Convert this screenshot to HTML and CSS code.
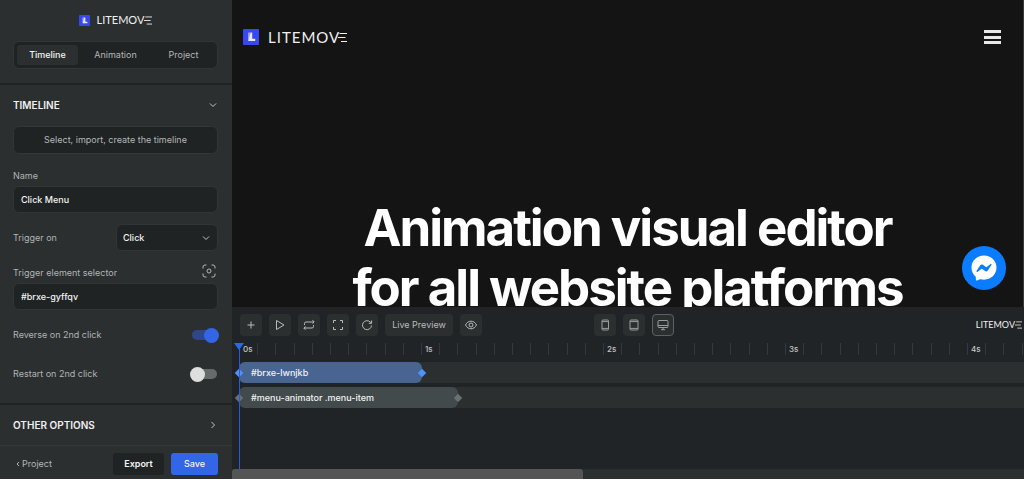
FILE: index.html
```html
<!DOCTYPE html>
<html lang="en">
<head>
<meta charset="utf-8">
<title>Litemove</title>
<link rel="stylesheet" href="styles.css">
</head>
<body>
<div class="app">
  <aside class="sidebar">
    <header class="side-head">
      <div class="brand brand-small">
        <svg class="mark" viewBox="0 0 16 16"><rect width="16" height="16" rx="1" fill="#3a47f0"/><path d="M5 3.500h2.600v8.500H5z" fill="#98a0ff"/><path d="M7.600 3.500h1.600v6.300h3V12H5.500z" fill="#e8eaff"/></svg>
        <span class="word">LITEMOV<svg class="bars" viewBox="0 0 9 10"><path d="M1.500 1H9M0 5h7.500M3 9h6" /></svg></span>
      </div>
      <nav class="tabs">
        <button class="tab active">Timeline</button>
        <button class="tab">Animation</button>
        <button class="tab">Project</button>
      </nav>
    </header>
    <section class="panel">
      <button class="panel-title">TIMELINE<svg class="chev" viewBox="0 0 10 10"><path d="M2 3.500l3 3 3-3"/></svg></button>
      <button class="picker">Select, import, create the timeline</button>
      <label class="label" for="name">Name</label>
      <input class="field" id="name" value="Click Menu">
      <div class="row row-select">
        <label class="label" for="trigger">Trigger on</label>
        <span class="select-wrap">
          <select class="field" id="trigger"><option>Click</option></select>
          <svg class="chev select-chev" viewBox="0 0 10 10"><path d="M2 3.500l3 3 3-3"/></svg>
        </span>
      </div>
      <div class="row row-selector">
        <label class="label" for="selector">Trigger element selector</label>
        <button class="target" aria-label="Pick element"><svg viewBox="0 0 14 14"><path d="M1 4.500V3a2 2 0 0 1 2-2h1.500M9.500 1H11a2 2 0 0 1 2 2v1.500M13 9.500V11a2 2 0 0 1-2 2H9.500M4.500 13H3a2 2 0 0 1-2-2V9.500"/><circle cx="7" cy="7" r="2"/></svg></button>
      </div>
      <input class="field" id="selector" value="#brxe-gyffqv">
      <div class="row row-switch">
        <label class="label" for="reverse">Reverse on 2nd click</label>
        <input class="switch" type="checkbox" id="reverse" checked>
      </div>
      <div class="row row-switch">
        <label class="label" for="restart">Restart on 2nd click</label>
        <input class="switch" type="checkbox" id="restart">
      </div>
    </section>
    <section class="panel panel-closed">
      <button class="panel-title">OTHER OPTIONS<svg class="chev" viewBox="0 0 10 10"><path d="M3.500 2l3 3-3 3"/></svg></button>
    </section>
    <footer class="side-foot">
      <a class="back" href="#"><svg viewBox="0 0 4 6"><path d="M3 1L1 3l2 2"/></svg>Project</a>
      <button class="btn">Export</button>
      <button class="btn btn-primary">Save</button>
    </footer>
  </aside>

  <main class="stage">
    <div class="preview">
      <div class="site-head">
        <div class="brand brand-large">
          <svg class="mark" viewBox="0 0 16 16"><rect width="16" height="16" rx="1" fill="#3a47f0"/><path d="M5 3.500h2.600v8.500H5z" fill="#98a0ff"/><path d="M7.600 3.500h1.600v6.300h3V12H5.500z" fill="#e8eaff"/></svg>
          <span class="word">LITEMOV<svg class="bars" viewBox="0 0 9 10"><path d="M1.500 1H9M0 5h7.500M3 9h6" /></svg></span>
        </div>
        <button class="burger" aria-label="Menu"><i></i><i></i><i></i></button>
      </div>
      <h1 class="hero">Animation visual editor<br>for all website platforms</h1>
      <button class="chat" aria-label="Chat"><svg viewBox="0 0 26 26"><path fill="#fff" d="M13 .5C5.900.5.500 5.700.500 12.600c0 3.700 1.500 6.800 4 8.900.2.200.3.500.3.700l.1 2.300c0 .7.700 1.200 1.400.9l2.500-1.100c.2-.1.500-.1.700-.1 1.100.3 2.300.5 3.500.5 7.100 0 12.500-5.200 12.500-12.100S20.100.500 13 .5z"/><path fill="#0a7cff" d="M5.500 16.100l3.700-5.800c.6-.9 1.800-1.200 2.700-.5l2.900 2.200c.3.200.6.200.9 0l3.900-3c.5-.4 1.200.2.900.8l-3.700 5.800c-.6.900-1.800 1.200-2.700.5l-2.900-2.200c-.3-.2-.6-.2-.9 0l-3.900 3c-.5.400-1.200-.2-.9-.8z"/></svg></button>
    </div>

    <div class="timeline">
      <div class="toolbar">
        <button class="tool" aria-label="Add"><svg viewBox="0 0 14 14"><path d="M7 3.500v7M3.500 7h7"/></svg></button>
        <button class="tool" aria-label="Play"><svg viewBox="0 0 14 14"><path d="M3.500 2.500v9L11 7z"/></svg></button>
        <button class="tool" aria-label="Loop"><svg viewBox="0 0 14 14"><path d="M2.500 7V5.500a1.500 1.500 0 0 1 1.500-1.500h8M10.500 2.200L12.200 4l-1.700 1.500M11.500 7v1.500A1.500 1.500 0 0 1 10 10H2M3.500 8.500L1.800 10l1.700 1.800"/></svg></button>
        <button class="tool" aria-label="Fit"><svg viewBox="0 0 14 14"><path d="M2.500 5V2.500H5M9 2.500h2.500V5M11.500 9v2.500H9M5 11.500H2.500V9"/></svg></button>
        <button class="tool" aria-label="Reload"><svg viewBox="0 0 14 14"><path d="M11.500 7.500A4.500 4.500 0 1 1 10.200 4l1 .9M11.600 2.500v2.800H8.800"/></svg></button>
        <button class="tool tool-text">Live Preview</button>
        <button class="tool" aria-label="Show"><svg viewBox="0 0 14 14"><path d="M1.500 7C2.800 4.500 4.700 3.200 7 3.200S11.200 4.500 12.500 7C11.200 9.500 9.300 10.800 7 10.800S2.800 9.500 1.500 7z"/><circle cx="7" cy="7" r="2"/></svg></button>
        <div class="devices">
          <button class="tool" aria-label="Phone"><svg viewBox="0 0 14 14"><rect x="4" y="2" width="6.500" height="10" rx="1"/><path d="M4 3.600h6.500M4 10.400h6.500"/></svg></button>
          <button class="tool" aria-label="Tablet"><svg viewBox="0 0 14 14"><rect x="3" y="2" width="8" height="10" rx="1"/><path d="M3 3.600h8M3 10.400h8"/></svg></button>
          <button class="tool selected" aria-label="Desktop"><svg viewBox="0 0 14 14"><rect x="2" y="2.500" width="10" height="7" rx="1"/><path d="M2 7.500h10M7 9.500v2M5 11.700h4"/></svg></button>
        </div>
        <div class="brand brand-tiny"><span class="word">LITEMOV<svg class="bars" viewBox="0 0 9 10"><path d="M1.500 1H9M0 5h7.500M3 9h6" /></svg></span></div>
      </div>
      <div class="lanes">
        <div class="ruler">
          <div class="second"><b>0s</b><i></i><i></i><i></i><i></i><i></i><i></i><i></i><i></i><i></i></div>
          <div class="second"><b>1s</b><i></i><i></i><i></i><i></i><i></i><i></i><i></i><i></i><i></i></div>
          <div class="second"><b>2s</b><i></i><i></i><i></i><i></i><i></i><i></i><i></i><i></i><i></i></div>
          <div class="second"><b>3s</b><i></i><i></i><i></i><i></i><i></i><i></i><i></i><i></i><i></i></div>
          <div class="second"><b>4s</b><i></i><i></i><i></i><i></i><i></i><i></i><i></i><i></i><i></i></div>
        </div>
        <div class="lane"><div class="clip clip-blue">#brxe-lwnjkb</div></div>
        <div class="lane"><div class="clip clip-gray">#menu-animator .menu-item</div></div>
        <div class="playhead"></div>
      </div>
      <div class="scroll"><div class="thumb"></div></div>
    </div>
  </main>
</div>
</body>
</html>
```
FILE: styles.css
```css
* { box-sizing: border-box; }
body { margin: 0; background: #141414; color: #b4b7b8; font: 9px/12px Inter, "Liberation Sans", sans-serif; }
button, input, select { font: inherit; color: inherit; margin: 0; padding: 0; border: 0; background: none; }
svg { display: block; fill: none; stroke: currentColor; }
.app { display: grid; grid-template-columns: 232px minmax(0, 1fr); height: 100vh; overflow: hidden; }

.sidebar { display: flex; flex-direction: column; background: #2b2f30; }
.side-head { padding: 14px 14px 14px 13px; border-bottom: 2px solid #1f2324; }
.brand { display: flex; align-items: center; color: #f0f0f0; }
.brand .mark { stroke: none; }
.word { display: flex; align-items: center; font-family: Lato, sans-serif; }
.bars { stroke-width: 1; }
.brand-small { justify-content: center; gap: 7px; height: 12px; }
.brand-small .mark { width: 11px; height: 11px; }
.brand-small .word { font-size: 11px; }
.brand-small .bars { width: 8px; height: 9px; }

.tabs { display: flex; gap: 7px; margin-top: 15px; padding: 3px; height: 28px; background: #1f2324; border: 1px solid #303536; border-radius: 6px; }
.tab { flex: 1; border-radius: 3px; }
.tab.active { background: #2b2f30; color: #f2f2f2; font-weight: 500; }

.panel { display: flex; flex-direction: column; padding: 12px 14px 12px 13px; border-bottom: 2px solid #1f2324; }
.panel-title { display: flex; align-items: center; justify-content: space-between; height: 16px; color: #f0f0f0; font-size: 10px; font-weight: 600; }
.chev { width: 10px; height: 10px; color: #c0c3c4; stroke-width: 1; }
.picker, .field { width: 100%; background: #1f2324; border: 1px solid #303536; border-radius: 6px; }
.picker { height: 28px; margin: 13px 0 16px; }
.field { height: 27px; padding: 0 7px; color: #f2f2f2; font-weight: 500; }
.label { color: #b0b4b5; }
.picker + .label { margin-bottom: 4px; }
.row { display: flex; align-items: center; justify-content: space-between; }
.row-select { margin: 11px 0; }
.select-wrap { position: relative; width: 102px; }
select.field { appearance: none; display: block; padding: 0 6px; }
.select-chev { position: absolute; right: 7px; top: 9px; pointer-events: none; }
.row-selector { height: 17px; align-items: flex-end; margin: 0 2px 4px 0; }
.target { width: 14px; height: 16px; }
.target svg { width: 14px; height: 14px; }
.row-switch { height: 16px; margin-top: 17px; }
.row-switch + .row-switch { margin: 23px 0 9px; }
.switch { appearance: none; display: flex; align-items: center; width: 25px; height: 10px; margin-right: 1px; border-radius: 5px; background: #666a6b; }
.switch::before { content: ""; width: 15px; height: 15px; margin-left: -2px; flex: none; border-radius: 50%; background: #dedede; }
.switch:checked { background: #2d4788; justify-content: flex-end; }
.switch:checked::before { background: #3366e6; margin-right: -2px; }
.panel-closed { border-bottom: 1px solid #343839; }
.side-foot { display: flex; align-items: center; gap: 7px; padding: 7px 14px 4px 16px; }
.back { display: flex; align-items: center; gap: 2px; margin-right: auto; color: #b4b7b8; text-decoration: none; }
.back svg { width: 4px; height: 6px; }
.btn { width: 51px; height: 22px; border-radius: 3px; background: #1f2324; color: #f4f4f4; font-weight: 600; }
.btn-primary { width: 47px; background: #3366e6; font-weight: 500; }

.stage { display: flex; flex-direction: column; min-width: 0; height: 100vh; }
.preview { position: relative; flex: 1; min-height: 0; overflow: hidden; background: #141414; border-right: 1px solid #3a3a3a; }
.site-head { display: flex; align-items: center; justify-content: space-between; padding: 28px 22px 0 11px; }
.brand-large { gap: 9px; height: 18px; }
.brand-large .mark { width: 16px; height: 16px; }
.brand-large .word { font-size: 15px; letter-spacing: 1px; }
.brand-large .bars { width: 9px; height: 11px; margin-left: -2px; }
.burger { display: flex; flex-direction: column; justify-content: space-between; width: 17px; height: 14px; }
.burger i { height: 3px; background: #e8e8e8; }
.hero { margin: 152px 0 0; color: #fff; font-size: 51px; line-height: 60px; font-weight: 700; letter-spacing: -2px; text-align: center; white-space: nowrap; }
.chat { position: absolute; right: 17px; bottom: 17px; width: 44px; height: 44px; padding: 9px; border-radius: 50%; background: #0a7cff; }
.chat svg { stroke: none; }

.timeline { display: flex; flex-direction: column; height: 172px; background: #202426; }
.toolbar { display: flex; gap: 7px; padding: 7px 2px 7px 8px; }
.tool { display: grid; place-items: center; width: 22px; height: 22px; border-radius: 4px; background: #2b2f30; color: #b9bcbd; }
.tool svg { width: 14px; height: 14px; stroke-width: 1; }
.tool-text { width: 68px; }
.devices { display: flex; gap: 7px; margin-left: 105px; }
.devices .tool { color: #9a9e9f; }
.selected { border: 1px solid #5c6061; }
.brand-tiny { margin-left: auto; }
.brand-tiny .word { font-size: 9px; }
.brand-tiny .bars { width: 7px; height: 8px; }

.lanes { position: relative; flex: 1; margin-left: 7px; }
.ruler { display: flex; height: 12px; margin-bottom: 7px; overflow: hidden; }
.second { display: grid; grid-template-columns: repeat(10, minmax(0, 1fr)); flex: 0 0 182px; }
.second > * { border-left: 1px solid #34383a; }
.second b { padding-left: 3px; font-size: 8px; font-weight: 500; color: #c4c6c7; }
.lane { height: 21px; margin-bottom: 4px; background: #2b2f30; border-radius: 6px 0 0 6px; }
.clip { position: relative; height: 100%; padding-left: 12px; line-height: 21px; border-radius: 6px; color: #f2f2f2; font-weight: 500; }
.clip::before, .clip::after { content: ""; position: absolute; top: 8px; width: 6px; height: 6px; background: #4f92fb; transform: rotate(45deg); }
.clip::before { left: -3px; }
.clip::after { right: -3px; }
.clip-blue { width: 183px; background: #486592; }
.clip-gray { width: 219px; background: #424a4b; }
.clip-gray::before, .clip-gray::after { background: #687071; }
.playhead { position: absolute; left: 0; top: 0; bottom: 0; width: 1px; background: #2a5cd6; }
.playhead::before { content: ""; position: absolute; left: -5px; top: 0; border: 5px solid transparent; border-top: 7px solid #2c66ea; border-bottom: 0; }
.scroll { height: 10px; background: #2b2f30; }
.thumb { width: 351px; height: 100%; border-radius: 3px 3px 0 0; background: #555; }
```
